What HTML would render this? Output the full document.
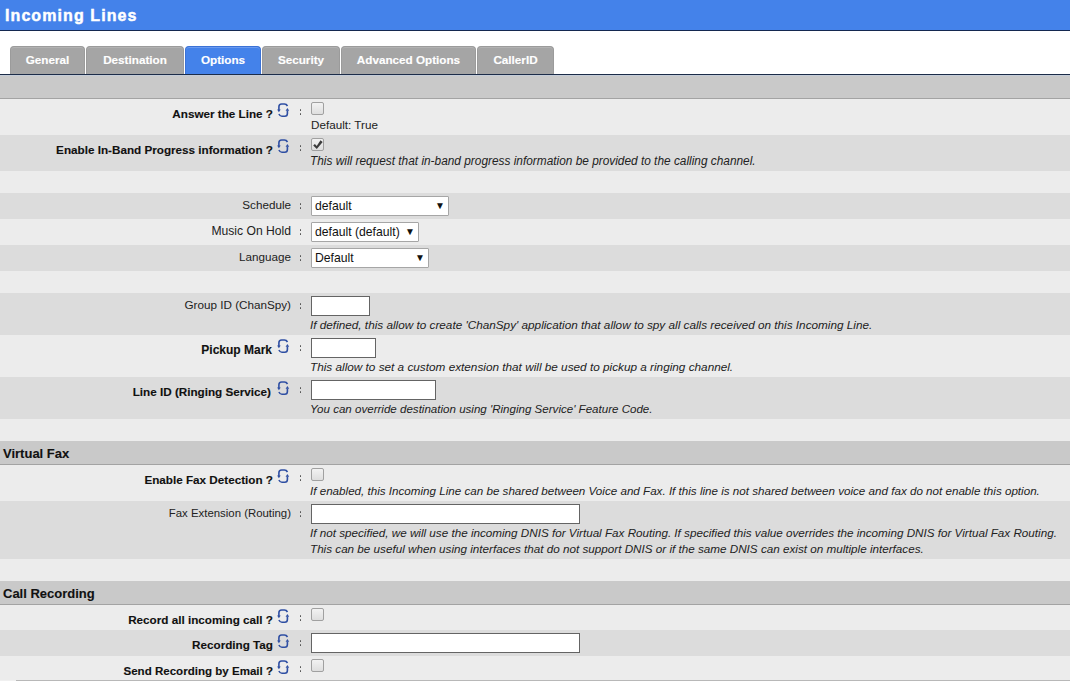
<!DOCTYPE html>
<html><head><meta charset="utf-8">
<style>
*{box-sizing:border-box;margin:0;padding:0}
html,body{width:1070px;height:681px;overflow:hidden;background:#fff}
body{position:relative;font-family:"Liberation Sans",sans-serif;font-size:11.7px;color:#222}
.a{position:absolute}
.hdr{left:0;top:0;width:1070px;height:31px;background:#4482ea;border-bottom:1px solid #142850}
.title{left:5px;top:6px;font-size:16px;font-weight:bold;color:#fff;letter-spacing:1.08px;-webkit-text-stroke:0.45px #fff;line-height:20px;white-space:nowrap}
.tab{top:46px;height:28px;background:#a5a5a5;border:1px solid #9b9b9b;border-bottom:0;box-shadow:inset 0 1px 0 #b2b2b2;border-radius:4px 4px 0 0;color:#fff;font-weight:bold;text-align:center;line-height:26px;white-space:nowrap;-webkit-text-stroke:0.15px #fff}
.tab.on{background:#4482ea;border-color:#3b72d6;box-shadow:inset 0 1px 0 #6a9af0}
.band{left:0;width:1070px;background:#c9c9c9;border-bottom:1px solid #a3a3a3}
.row{left:0;width:1070px}
.l{background:#ececec}
.d{background:#dcdcdc}
.lab{right:779px;white-space:nowrap;line-height:14px}
.labb{right:797px;white-space:nowrap;font-weight:bold;line-height:14px;color:#111;-webkit-text-stroke:0.12px #111}
.cd{left:300px;width:1.4px;height:2px;background:#505050;box-shadow:0 4px 0 #505050;border-radius:0.5px}
.ic{width:20px;height:20px}
.cb{left:311px;width:13px;height:13px;border:1px solid #a0a0a0;border-radius:2px;background:linear-gradient(#f2f2f2,#dedede)}
.inp{left:311px;height:20px;background:#fff;border:1px solid #646464}
.sel{left:311px;height:20px;background:#fff;border:1px solid #a6a6a6;border-radius:1px}
.sel span{position:absolute;left:3px;top:2px;line-height:14px;font-size:12.2px;white-space:nowrap;color:#111}
.sel b{position:absolute;top:3px;font-size:10px;line-height:12px;color:#111}
.hint{left:310px;font-style:italic;white-space:nowrap;line-height:14px}
.sec{left:3px;font-weight:bold;line-height:16px;font-size:13px;color:#111;-webkit-text-stroke:0.12px #111;white-space:nowrap}
</style></head><body>
<div class="a hdr"></div>
<div class="a title">Incoming Lines</div>

<div class="a tab" style="left:10px;width:75px">General</div>
<div class="a tab" style="left:86px;width:98px">Destination</div>
<div class="a tab on" style="left:185px;width:76px">Options</div>
<div class="a tab" style="left:262px;width:78px">Security</div>
<div class="a tab" style="left:341px;width:135px">Advanced Options</div>
<div class="a tab" style="left:477px;width:77px">CallerID</div>

<div class="a" style="left:0;top:74px;width:1070px;height:1px;background:#1c2c48"></div>
<div class="a band" style="top:75px;height:24px;border-top:1px solid #c4ccd8"></div>

<!-- rows -->
<div class="a row l" style="top:99px;height:36px"></div>
<div class="a row d" style="top:135px;height:36px"></div>
<div class="a row l" style="top:171px;height:22px"></div>
<div class="a row d" style="top:193px;height:26px"></div>
<div class="a row l" style="top:219px;height:26px"></div>
<div class="a row d" style="top:245px;height:26px"></div>
<div class="a row l" style="top:271px;height:22px"></div>
<div class="a row d" style="top:293px;height:42px"></div>
<div class="a row l" style="top:335px;height:42px"></div>
<div class="a row d" style="top:377px;height:42px"></div>
<div class="a row l" style="top:419px;height:22px"></div>
<div class="a band" style="top:441px;height:24px"></div>
<div class="a row l" style="top:465px;height:36px"></div>
<div class="a row d" style="top:501px;height:58px"></div>
<div class="a row l" style="top:559px;height:22px"></div>
<div class="a band" style="top:581px;height:24px"></div>
<div class="a row l" style="top:605px;height:25px"></div>
<div class="a row d" style="top:630px;height:26px"></div>
<div class="a row l" style="top:656px;height:25px"></div>
<div class="a" style="left:0;top:680px;width:16px;height:1px;background:#f0f0f0"></div><div class="a" style="left:16px;top:680px;width:1054px;height:1px;background:#b8b8b8"></div>

<svg width="0" height="0" style="position:absolute">
<defs>
<g id="ref" transform="translate(0,0.4)">
<path d="M14.5 5.6 C13.8 4.3 12.8 3.6 11.5 3.6 H8.6 C7 3.6 5.9 4.8 5.9 6.4 V9.6" fill="none" stroke="#2f4fa3" stroke-width="1.6"/>
<path d="M4.1 9.2 L7.7 9.2 L5.9 11.9 Z" fill="#2f4fa3"/>
<path d="M5.9 13.6 C6.6 15 7.6 15.9 8.9 15.9 H11.8 C13.4 15.9 14.4 14.7 14.4 13.1 V10" fill="none" stroke="#2f4fa3" stroke-width="1.6"/>
<path d="M12.6 10.4 L16.2 10.4 L14.4 7.6 Z" fill="#2f4fa3"/>
</g>
</defs>
</svg>

<!-- Answer the Line -->
<div class="a labb" style="top:107px">Answer the Line ?</div>
<svg class="a ic" style="left:273px;top:100px"><use href="#ref"/></svg>
<div class="a cd" style="top:109px"></div>
<div class="a cb" style="top:102px"></div>
<div class="a" style="left:311px;top:118px;line-height:14px">Default: True</div>

<!-- Enable In-Band -->
<div class="a labb" style="top:143px">Enable In-Band Progress information ?</div>
<svg class="a ic" style="left:273px;top:136px"><use href="#ref"/></svg>
<div class="a cd" style="top:145px"></div>
<div class="a cb" style="top:138px"></div>
<svg class="a" style="left:312px;top:139px" width="12" height="12"><path d="M1.2 6.6 L2.9 5.0 L4.7 6.9 L8.5 1.2 L10.7 3.0 L4.8 10.1 Z" fill="#3c3c3c"/></svg>
<div class="a hint" style="top:154px;font-size:11.86px">This will request that in-band progress information be provided to the calling channel.</div>

<!-- Schedule -->
<div class="a lab" style="top:198px">Schedule</div>
<div class="a cd" style="top:203px"></div>
<div class="a sel" style="top:196px;width:138px"><span>default</span><b style="left:123px">&#9660;</b></div>
<div class="a lab" style="top:224px;font-size:12.15px">Music On Hold</div>
<div class="a cd" style="top:229px"></div>
<div class="a sel" style="top:222px;width:108px"><span>default (default)</span><b style="left:93px">&#9660;</b></div>
<div class="a lab" style="top:250px">Language</div>
<div class="a cd" style="top:255px"></div>
<div class="a sel" style="top:248px;width:118px"><span>Default</span><b style="left:103px">&#9660;</b></div>

<!-- Group ID -->
<div class="a lab" style="top:298px">Group ID (ChanSpy)</div>
<div class="a cd" style="top:303px"></div>
<div class="a inp" style="top:296px;width:59px"></div>
<div class="a hint" style="top:318px;font-size:11.76px">If defined, this allow to create 'ChanSpy' application that allow to spy all calls received on this Incoming Line.</div>

<div class="a labb" style="top:343px;font-size:12px;right:798px">Pickup Mark</div>
<svg class="a ic" style="left:273px;top:336px"><use href="#ref"/></svg>
<div class="a cd" style="top:345px"></div>
<div class="a inp" style="top:338px;width:65px"></div>
<div class="a hint" style="top:360px;font-size:11.77px">This allow to set a custom extension that will be used to pickup a ringing channel.</div>

<div class="a labb" style="top:385px;right:799px">Line ID (Ringing Service)</div>
<svg class="a ic" style="left:273px;top:378px"><use href="#ref"/></svg>
<div class="a cd" style="top:387px"></div>
<div class="a inp" style="top:380px;width:125px"></div>
<div class="a hint" style="top:402px;font-size:11.57px">You can override destination using 'Ringing Service' Feature Code.</div>

<!-- Virtual Fax -->
<div class="a sec" style="top:446px">Virtual Fax</div>
<div class="a labb" style="top:473px">Enable Fax Detection ?</div>
<svg class="a ic" style="left:273px;top:466px"><use href="#ref"/></svg>
<div class="a cd" style="top:475px"></div>
<div class="a cb" style="top:468px"></div>
<div class="a hint" style="top:484px;font-size:11.64px">If enabled, this Incoming Line can be shared between Voice and Fax. If this line is not shared between voice and fax do not enable this option.</div>

<div class="a lab" style="top:506px;font-size:11.4px">Fax Extension (Routing)</div>
<div class="a cd" style="top:511px"></div>
<div class="a inp" style="top:504px;width:269px"></div>
<div class="a hint" style="top:525px;line-height:16px;font-size:11.68px">If not specified, we will use the incoming DNIS for Virtual Fax Routing. If specified this value overrides the incoming DNIS for Virtual Fax Routing.<br>This can be useful when using interfaces that do not support DNIS or if the same DNIS can exist on multiple interfaces.</div>

<!-- Call Recording -->
<div class="a sec" style="top:586px">Call Recording</div>
<div class="a labb" style="top:613px">Record all incoming call ?</div>
<svg class="a ic" style="left:273px;top:606px"><use href="#ref"/></svg>
<div class="a cd" style="top:615px"></div>
<div class="a cb" style="top:608px"></div>

<div class="a labb" style="top:638px">Recording Tag</div>
<svg class="a ic" style="left:273px;top:631px"><use href="#ref"/></svg>
<div class="a cd" style="top:640px"></div>
<div class="a inp" style="top:633px;width:269px"></div>

<div class="a labb" style="top:664px;font-size:11.55px">Send Recording by Email ?</div>
<svg class="a ic" style="left:273px;top:657px"><use href="#ref"/></svg>
<div class="a cd" style="top:666px"></div>
<div class="a cb" style="top:659px"></div>
</body></html>
